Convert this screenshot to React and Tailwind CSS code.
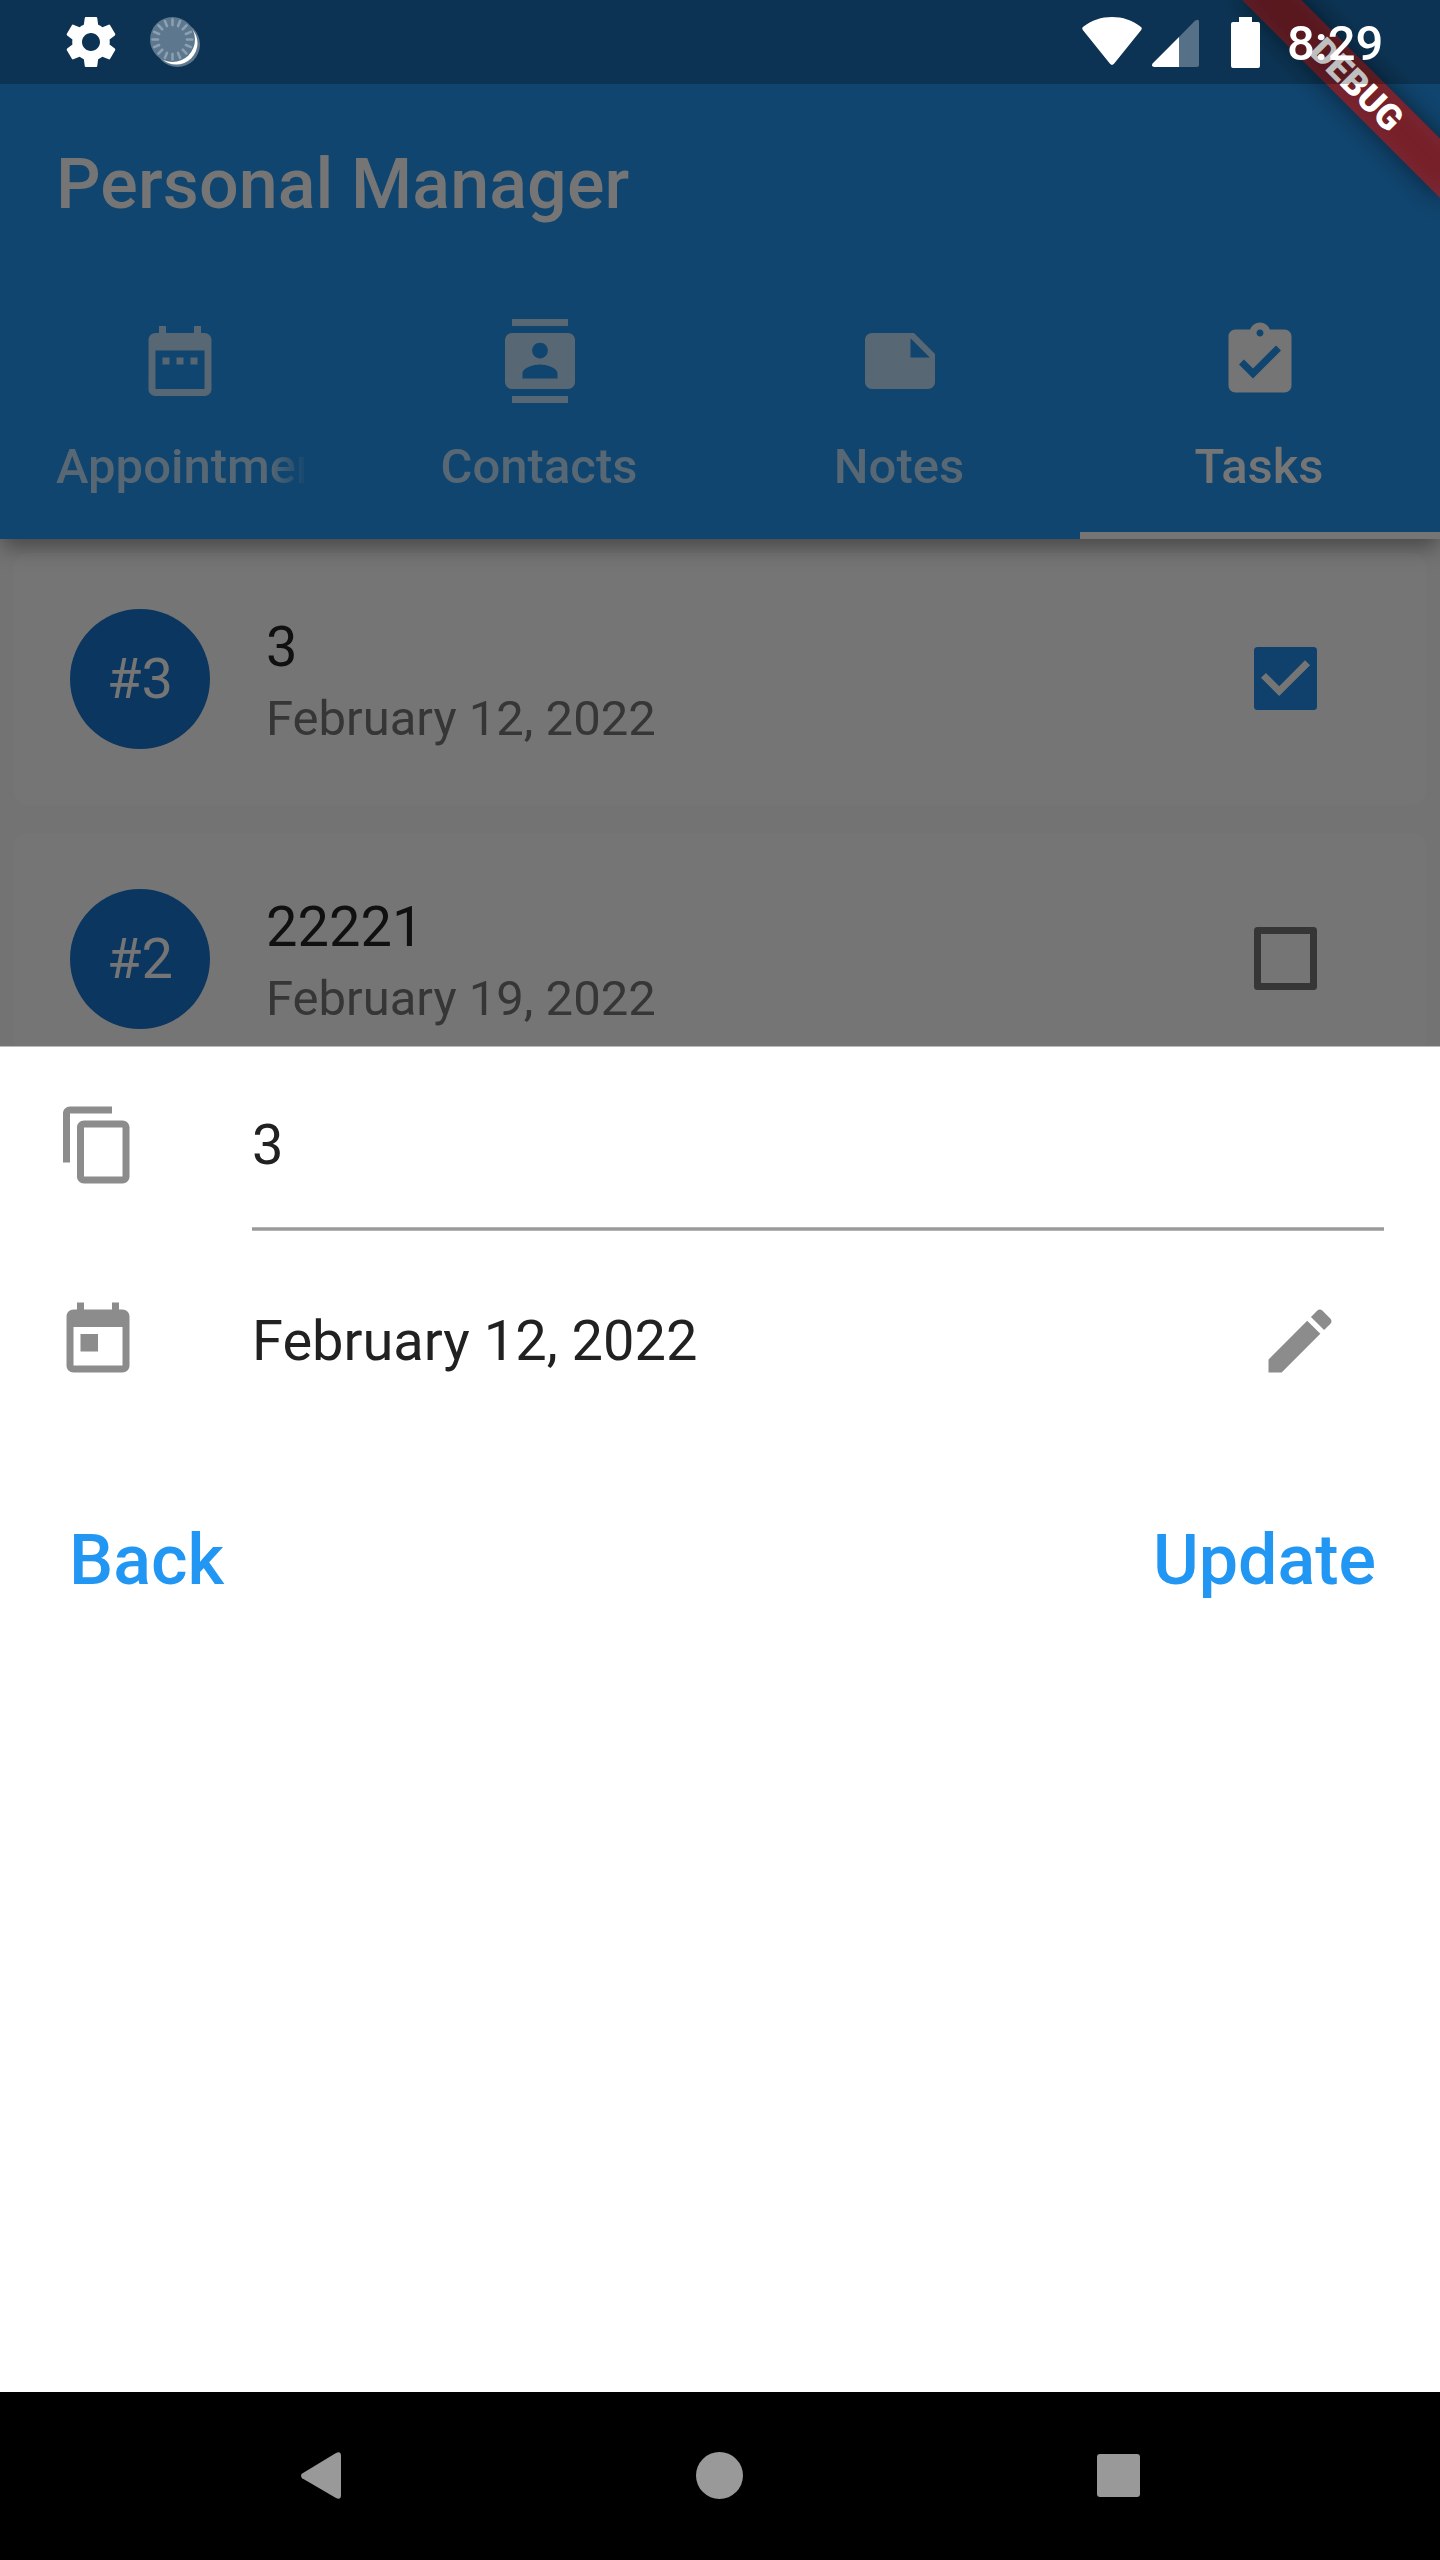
const icons = {
  dateRange:
    'M9 11H7v2h2v-2zm4 0h-2v2h2v-2zm4 0h-2v2h2v-2zm2-7h-1V2h-2v2H8V2H6v2H5c-1.11 0-1.99.9-1.99 2L3 20c0 1.1.89 2 2 2h14c1.1 0 2-.9 2-2V6c0-1.1-.9-2-2-2zm0 16H5V9h14v11z',
  contacts:
    'M20 0H4v2h16V0zM4 24h16v-2H4v2zM20 4H4c-1.1 0-2 .9-2 2v12c0 1.1.9 2 2 2h16c1.1 0 2-.9 2-2V6c0-1.1-.9-2-2-2zm-8 2.75c1.24 0 2.25 1.01 2.25 2.25s-1.01 2.25-2.25 2.25S9.75 10.24 9.75 9 10.76 6.75 12 6.75zM17 17H7v-1.5c0-1.67 3.33-2.5 5-2.5s5 .83 5 2.5V17z',
  note: 'M22 10l-6-6H4c-1.1 0-2 .9-2 2v12.01c0 1.1.9 1.99 2 1.99l16-.01c1.1 0 2-.89 2-1.99v-8zm-7-4.5l5.5 5.5H15V5.5z',
  taskDone:
    'M19 3h-4.18C14.4 1.84 13.3 1 12 1c-1.3 0-2.4.84-2.82 2H5c-1.1 0-2 .9-2 2v14c0 1.1.9 2 2 2h14c1.1 0 2-.9 2-2V5c0-1.1-.9-2-2-2zm-7 0c.55 0 1 .45 1 1s-.45 1-1 1-1-.45-1-1 .45-1 1-1zm-2 14l-4-4 1.41-1.41L10 14.17l6.59-6.59L18 9l-8 8z',
  copy: 'M16 1H4c-1.1 0-2 .9-2 2v14h2V3h12V1zm3 4H8c-1.1 0-2 .9-2 2v14c0 1.1.9 2 2 2h11c1.1 0 2-.9 2-2V7c0-1.1-.9-2-2-2zm0 16H8V7h11v14z',
  today:
    'M19 3h-1V1h-2v2H8V1H6v2H5c-1.11 0-1.99.9-1.99 2L3 19c0 1.1.89 2 2 2h14c1.1 0 2-.9 2-2V5c0-1.1-.9-2-2-2zm0 16H5V8h14v11zM7 10h5v5H7z',
  edit: 'M3 17.25V21h3.75L17.81 9.94l-3.75-3.75L3 17.25zM20.71 7.04c.39-.39.39-1.02 0-1.41l-2.34-2.34c-.39-.39-1.02-.39-1.41 0l-1.83 1.83 3.75 3.75 1.83-1.83z',
  settings:
    'M19.43 12.98c.04-.32.07-.64.07-.98s-.03-.66-.07-.98l2.11-1.65c.19-.15.24-.42.12-.64l-2-3.46c-.12-.22-.39-.3-.61-.22l-2.49 1c-.52-.4-1.08-.73-1.69-.98l-.38-2.65C14.46 2.18 14.25 2 14 2h-4c-.25 0-.46.18-.49.42l-.38 2.65c-.61.25-1.17.59-1.69.98l-2.49-1c-.23-.09-.49 0-.61.22l-2 3.46c-.13.22-.07.49.12.64l2.11 1.65c-.04.32-.07.65-.07.98s.03.66.07.98l-2.11 1.65c-.19.15-.24.42-.12.64l2 3.46c.12.22.39.3.61.22l2.49-1c.52.4 1.08.73 1.69.98l.38 2.65c.03.24.24.42.49.42h4c.25 0 .46-.18.49-.42l.38-2.65c.61-.25 1.17-.59 1.69-.98l2.49 1c.23.09.49 0 .61-.22l2-3.46c.12-.22.07-.49-.12-.64l-2.11-1.65zM12 15.6c-1.98 0-3.6-1.62-3.6-3.6s1.62-3.6 3.6-3.6 3.6 1.62 3.6 3.6-1.62 3.6-3.6 3.6z',
}

function Icon({ name, className }) {
  return (
    <svg viewBox="0 0 24 24" fill="currentColor" className={className}>
      <path d={icons[name]} />
    </svg>
  )
}

const ticks = Array.from({ length: 16 }, (_, i) => i * 22.5)

function SyncIcon() {
  return (
    <svg viewBox="0 0 50 50" className="ml-[29px] h-[50px] w-[50px]">
      <circle cx="27.5" cy="27.5" r="22.5" fill="#5d788e" />
      <circle cx="26.2" cy="26.2" r="21.3" fill="#fff" />
      <circle cx="22.5" cy="22.5" r="22.5" fill="#5d788e" />
      {ticks.map((a) => (
        <line
          key={a}
          x1="22.5"
          y1="2.6"
          x2="22.5"
          y2="8"
          stroke="#8ba0b0"
          strokeWidth="2.6"
          strokeLinecap="round"
          transform={`rotate(${a} 22.5 22.5)`}
        />
      ))}
    </svg>
  )
}

function StatusBar() {
  return (
    <div className="absolute inset-x-0 top-0 z-20 flex h-[84px] items-center bg-black/25 pr-[58px] pl-[61px] text-white">
      <Icon name="settings" className="h-[60px] w-[60px]" />
      <SyncIcon />
      <svg viewBox="0 0 60 50" className="ml-auto h-[50px] w-[60px]" fill="#fff">
        <path d="M1 13.2Q-.7 11.3 1.3 9.8C9.5 3.2 19.500 0 30 0s20.500 3.200 28.700 9.800Q60.700 11.300 59 13.200L32 46.800Q30 49 28 46.800Z" />
      </svg>
      <svg viewBox="0 0 47 50" className="ml-[10px] h-[50px] w-[47px]">
        <path d="M27 20L43 3.800Q47 1 47 5V47.500Q47 50 44.500 50H27Z" fill="#fff" fillOpacity=".3" />
        <path d="M27 20V50H2.500Q-1.200 50 .6 46.400Z" fill="#fff" />
      </svg>
      <svg viewBox="0 0 29 51" className="ml-[32px] h-[51px] w-[29px]" fill="#fff">
        <path d="M8 0h13v5h6q2 0 2 2v42q0 2-2 2H2q-2 0-2-2V7q0-2 2-2h6z" />
      </svg>
      <span className="ml-[27px] w-[95px] pt-[3px] text-[49px] leading-[56px] font-medium">8:29</span>
    </div>
  )
}

function DebugBanner() {
  return (
    <div className="absolute top-0 left-full h-0 w-0 rotate-45">
      <div className="absolute top-[98px] left-[-140px] h-[42px] w-[280px] bg-black/50 blur-[13px]" />
      <div className="absolute top-[98px] left-[-140px] h-[42px] w-[280px] bg-[#b71c1c]/63 pl-[2px] text-center text-[35.7px] leading-[42px] font-black text-white">
        DEBUG
      </div>
    </div>
  )
}

const tabs = [
  { label: 'Appointments', icon: 'dateRange' },
  { label: 'Contacts', icon: 'contacts' },
  { label: 'Notes', icon: 'note' },
  { label: 'Tasks', icon: 'taskDone', active: true },
]

function Tab({ label, icon, active }) {
  return (
    <div
      className={`flex min-w-0 flex-col items-center border-b-[7px] px-14 pt-[39px] ${
        active ? 'border-[#757575] text-[#757575]' : 'border-transparent text-[#576774]'
      }`}
    >
      <Icon name={icon} className="h-[84px] w-[84px] shrink-0" />
      <div
        className={`mt-[35px] max-w-full overflow-hidden pr-[2px] text-[49px] leading-[57px] font-medium whitespace-nowrap ${
          label === 'Appointments' ? 'mask-r-from-86% mask-r-to-102%' : ''
        }`}
      >
        {label}
      </div>
    </div>
  )
}

function Header() {
  return (
    <header className="relative z-10 h-[539px] bg-[#10456f] pt-[84px] shadow-[0_10px_20px_-2px_rgba(0,0,0,0.38)]">
      <div className="flex h-[196px] items-center px-[56px] pt-[4px] text-[70px] leading-[82px] font-medium tracking-[0.1px] text-[#757575]">
        Personal Manager
      </div>
      <div className="grid h-[259px] grid-cols-4">
        {tabs.map((t) => (
          <Tab key={t.label} {...t} />
        ))}
      </div>
    </header>
  )
}

const tasks = [
  { id: 3, title: '3', date: 'February 12, 2022', done: true },
  { id: 2, title: '22221', date: 'February 19, 2022', done: false },
]

function Checkbox({ checked }) {
  return checked ? (
    <svg viewBox="0 0 63 63" className="mb-px h-[63px] w-[63px] rounded-[3.5px] bg-[#10406c]">
      <path d="M9.450 28.350L25.200 44.100L53.550 15.750" fill="none" stroke="#757575" strokeWidth="7" />
    </svg>
  ) : (
    <div className="mb-px h-[63px] w-[63px] rounded-[3.5px] border-[7px] border-[#363636]" />
  )
}

function TaskCard({ id, title, date, done }) {
  return (
    <div className="flex h-[252px] items-center rounded-[14px] bg-[#757575] pr-[109px] pl-[56px]">
      <div className="flex h-[140px] w-[140px] items-center justify-center rounded-full bg-[#0b3660] text-[56px] leading-[66px] text-[#757575]">
        #{id}
      </div>
      <div className="ml-[56px] flex-1 pt-[8px]">
        <div className="text-[56px] leading-[70px] text-[#101010]">{title}</div>
        <div className="mt-[2px] text-[49px] leading-[70px] text-[#363636]">{date}</div>
      </div>
      <Checkbox checked={done} />
    </div>
  )
}

function EditSheet() {
  return (
    <section className="absolute inset-x-0 top-[1046px] z-10 h-[1346px] border-t border-[#bababa] bg-white text-[#212121]">
      <div className="flex h-[180px] pr-[56px] pl-[56px]">
        <Icon name="copy" className="mt-[56px] h-[84px] w-[84px] text-[#8c8c8c]" />
        <div className="ml-[112px] flex-1 pt-[65px] text-[56px] leading-[66px]">3</div>
      </div>
      <div className="mr-[56px] ml-[252px] h-[4px] border-y border-[#b4b4b4] bg-[#9a9a9a]" />
      <div className="flex h-[219px] items-center pr-[98.500px] pl-[56px]">
        <Icon name="today" className="h-[84px] w-[84px] text-[#8c8c8c]" />
        <div className="ml-[112px] flex-1 text-[56px] leading-[66px]">February 12, 2022</div>
        <Icon name="edit" className="h-[84px] w-[84px] text-[#8c8c8c]" />
      </div>
      <div className="flex h-[220px] items-center justify-between pr-[64px] pl-[69px] text-[70px] leading-[82px] font-medium text-[#2196f3]">
        <button>Back</button>
        <button>Update</button>
      </div>
    </section>
  )
}

function NavBar() {
  return (
    <nav className="absolute inset-x-0 bottom-0 z-20 grid h-[168px] grid-cols-[301px_395px_401px_1fr] items-center bg-black pb-[2px]">
      <span />
      <svg viewBox="0 0 40 47" className="h-[47px] w-[40px]" fill="#999">
        <path d="M1.200 26.200Q-1.200 23.500 1.200 21.400L35 1Q40 -1.500 40 4V43Q40 48.500 35 46Z" />
      </svg>
      <div className="h-[47px] w-[47px] rounded-full bg-[#999]" />
      <div className="h-[43px] w-[43px] rounded-[3px] bg-[#999]" />
    </nav>
  )
}

export default function App() {
  return (
    <div className="relative h-[2560px] w-[1440px] overflow-hidden bg-[#737373] font-[Roboto,sans-serif]">
      <Header />
      <main className="flex flex-col gap-[28px] p-[14px]">
        {tasks.map((t) => (
          <TaskCard key={t.id} {...t} />
        ))}
      </main>
      <EditSheet />
      <div className="absolute inset-0 z-10 overflow-hidden">
        <DebugBanner />
      </div>
      <StatusBar />
      <NavBar />
    </div>
  )
}
